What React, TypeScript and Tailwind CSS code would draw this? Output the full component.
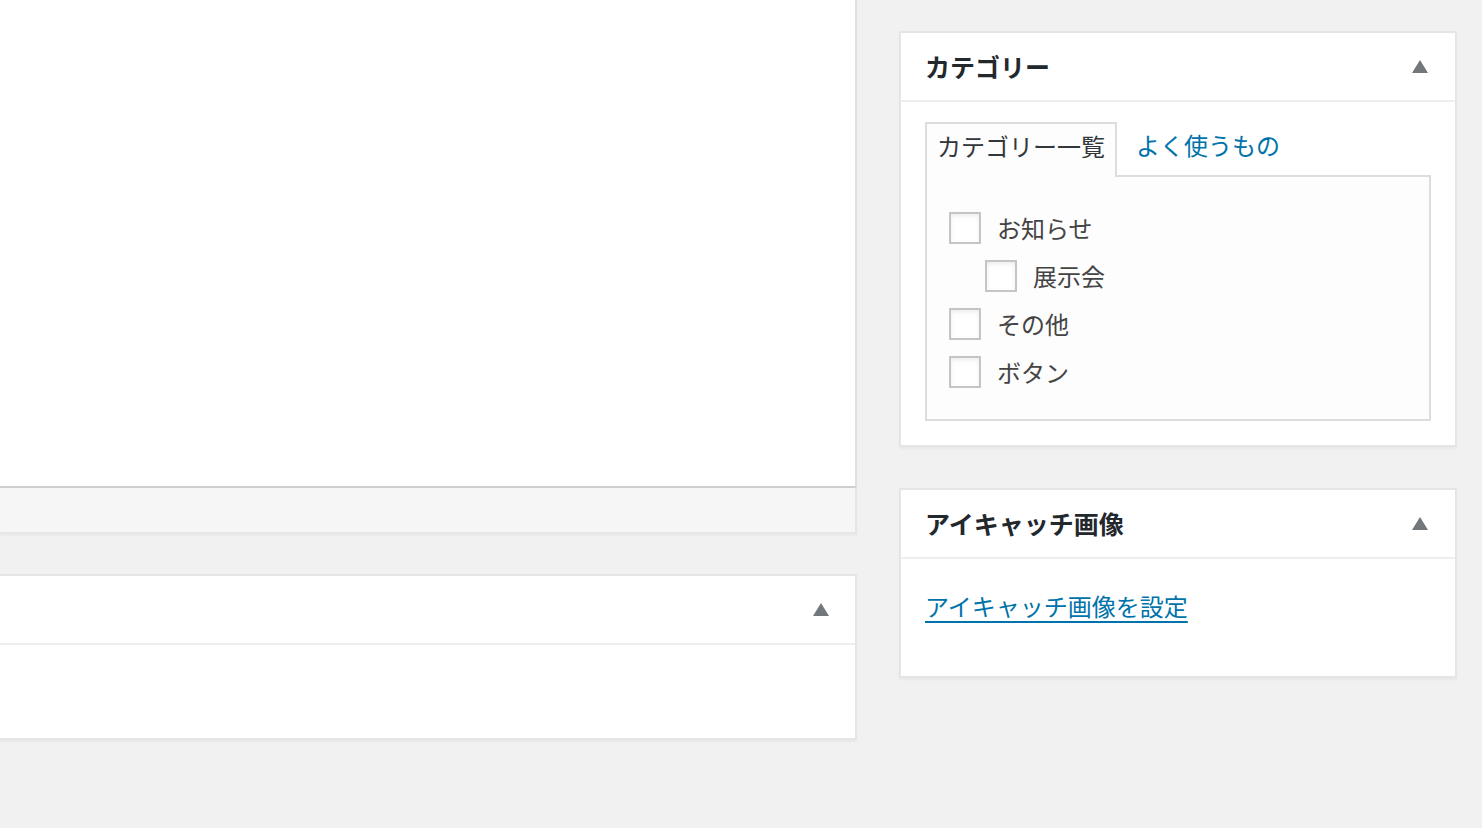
import React from "react";

const font = {
  fontFamily: '"Noto Sans CJK JP", "Noto Sans", "Liberation Sans", sans-serif',
};

const ArrowUp = () => (
  <svg width="16" height="14" viewBox="0 0 16 14" className="shrink-0">
    <polygon points="8,0 16,13 0,13" fill="#72777c" />
  </svg>
);

const categories = [
  { id: 1, name: "お知らせ", child: false },
  { id: 2, name: "展示会", child: true },
  { id: 3, name: "その他", child: false },
  { id: 4, name: "ボタン", child: false },
];

const Checkbox = () => (
  <span className="w-[32px] h-[32px] border-2 border-[#c3c6c9] bg-white shadow-[inset_0_2px_4px_rgba(0,0,0,0.08)] shrink-0" />
);

const PanelHeader = ({ title }: { title?: string }) => (
  <div className="flex items-center justify-between h-[69px] pl-[24px] pr-[27px] border-b-2 border-[#eeeeee]">
    <p className="text-[25px] font-bold text-[#23282d] leading-none">{title}</p>
    <ArrowUp />
  </div>
);

const App = () => {
  return (
    <div
      className="flex w-[1482px] h-[828px] bg-[#f1f1f1] overflow-hidden"
      style={font}
    >
      {/* left column */}
      <div className="flex flex-col w-[857px] shrink-0">
        <div className="h-[488px] bg-white border-r-2 border-[#e3ded8] border-b-2 border-b-[#cfcfcf]" />
        <div className="h-[46px] bg-[#f6f6f6] border-r-2 border-[#e5e5e5] border-b-2 border-b-[#e6e6e6] shadow-[0_2px_2px_rgba(0,0,0,0.03)]" />
        <div className="mt-[40px] bg-white border-2 border-l-0 border-[#e5e5e5] shadow-[0_2px_2px_rgba(0,0,0,0.04)]">
          <div className="flex items-center justify-end h-[69px] pr-[26px] border-b-2 border-[#eeeeee]">
            <ArrowUp />
          </div>
          <div className="h-[93px]" />
        </div>
      </div>

      {/* right column */}
      <div className="flex flex-col ml-[42px] w-[558px] pt-[31px]">
        <div className="bg-white border-2 border-[#e5e5e5] shadow-[0_2px_2px_rgba(0,0,0,0.04)]">
          <PanelHeader title="カテゴリー" />
          <div className="pt-[20px] px-[24px] pb-[24px]">
            <div className="flex items-end">
              <div className="relative z-10 -mb-[2px] h-[55px] px-[10px] pb-[9px] flex items-center border-2 border-b-0 border-[#dddddd] bg-[#fdfdfd]">
                <span className="text-[24px] text-[#32373c] leading-none">
                  カテゴリー一覧
                </span>
              </div>
              <div className="h-[53px] pl-[19px] pb-[7px] flex items-center">
                <span className="text-[24px] text-[#0073aa] leading-none">
                  よく使うもの
                </span>
              </div>
            </div>
            <div className="border-2 border-[#dddddd] bg-[#fdfdfd] pt-[27px] pb-[23px] px-[22px]">
              {categories.map((c) => (
                <div
                  key={c.id}
                  className={`flex items-center h-[48px] gap-[16px] ${c.child ? "pl-[36px]" : ""}`}
                >
                  <Checkbox />
                  <span className="text-[24px] text-[#444444] leading-none">
                    {c.name}
                  </span>
                </div>
              ))}
            </div>
          </div>
        </div>

        <div className="mt-[41px] bg-white border-2 border-[#e5e5e5] shadow-[0_2px_2px_rgba(0,0,0,0.04)]">
          <PanelHeader title="アイキャッチ画像" />
          <div className="h-[117px] px-[24px] pt-[35px]">
            <a className="text-[24px] text-[#0073aa] underline underline-offset-[5px] decoration-2 leading-none">
              アイキャッチ画像を設定
            </a>
          </div>
        </div>
      </div>
    </div>
  );
};

export default App;
